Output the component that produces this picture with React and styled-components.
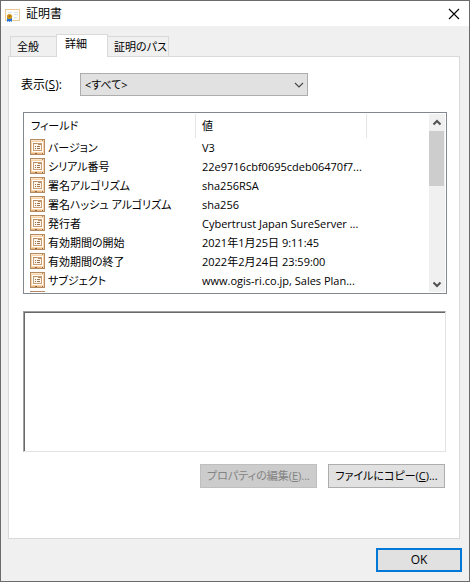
import React, { useState } from "react";
import styled, { createGlobalStyle, css } from "styled-components";

const GlobalStyle = createGlobalStyle`
	* {
		box-sizing: border-box;
	}
	body {
		margin: 0;
		background-color: #f0f0f0;
	}
	body, button, select, textarea {
		font-family: "Open Sans", "Noto Sans CJK JP", sans-serif;
		font-size: 11px;
		line-height: 16px;
		font-feature-settings: "palt";
		color: #000;
	}
`;

const Dialog = styled.div`
	display: flex;
	flex-direction: column;
	min-height: 100vh;
	border: 1px solid #6b6b6b;
	background-color: #f0f0f0;
`;

const TitleBar = styled.header`
	display: flex;
	align-items: center;
	height: 25px;
	padding-left: 4px;
	background-color: #fff;
`;

const Title = styled.h1`
	flex: 1;
	margin: 0 0 0 5px;
	font-size: 12px;
	font-weight: normal;
`;

const CloseButton = styled.button`
	display: flex;
	align-items: center;
	justify-content: center;
	width: 30px;
	height: 25px;
	padding: 0;
	border: none;
	background: none;
`;

const TabList = styled.div`
	display: flex;
	align-items: flex-end;
	height: 30px;
	padding-left: 9px;
`;

const Tab = styled.button`
	width: ${(props) => props.$width}px;
	height: 20px;
	padding: 0 0 0 6px;
	border: 1px solid #d9d9d9;
	border-bottom: none;
	border-left-width: ${(props) => (props.$first ? 1 : 0)}px;
	background-color: #f0f0f0;
	text-align: left;
	white-space: nowrap;

	${(props) =>
		props.$active &&
		css`
			height: 23px;
			margin-bottom: -1px;
			padding-bottom: 4px;
			padding-left: 8px;
			border-left-width: 1px;
			margin-left: -1px;
			background-color: #fff;
			z-index: 1;
		`}
`;

const Panel = styled.main`
	display: flex;
	flex: 1;
	flex-direction: column;
	margin: 0 9px 0 7px;
	padding: 16px 12px 50px 14px;
	border: 1px solid #d9d9d9;
	background-color: #fff;
`;

const FilterRow = styled.div`
	display: flex;
	align-items: center;
`;

const FilterLabel = styled.label`
	width: 59px;
	margin-left: -2px;
	font-size: 12px;
`;

const SelectBox = styled.div`
	display: grid;
	align-items: center;
	width: 228px;

	> * {
		grid-area: 1 / 1;
	}

	> svg {
		justify-self: end;
		margin-right: 4px;
		pointer-events: none;
	}
`;

const Select = styled.select`
	width: 100%;
	height: 23px;
	padding: 0 20px 0 4px;
	border: 1px solid #adadad;
	border-radius: 0;
	background-color: #e1e1e1;
	appearance: none;
`;

const ListBox = styled.div`
	display: flex;
	height: 182px;
	margin-top: 16px;
	padding: 1px;
	border: 1px solid #828790;
`;

const ListView = styled.div`
	flex: 1;
	min-width: 0;
	overflow: hidden;
`;

const Table = styled.table`
	width: 100%;
	border-collapse: separate;
	border-spacing: 0;
	table-layout: fixed;
`;

const HeadCell = styled.th`
	width: ${(props) => (props.$width ? `${props.$width}px` : "auto")};
	height: 24px;
	padding: 0 6px;
	border-right: ${(props) => (props.$width ? "1px solid #e5e5e5" : "none")};
	font-weight: normal;
	text-align: left;
`;

const Cell = styled.td`
	height: 19px;
	padding: 0 0 0 6px;
	white-space: nowrap;

	&:first-child {
		padding-left: 5px;
	}
`;

const Field = styled.div`
	display: flex;
	align-items: center;
	gap: 2px;
`;

const ScrollBar = styled.div`
	display: flex;
	flex-direction: column;
	width: 16px;
	background-color: #f0f0f0;
`;

const ScrollButton = styled.button`
	display: flex;
	align-items: center;
	justify-content: center;
	height: 17px;
	padding: 0;
	border: none;
	background: none;
`;

const ScrollTrack = styled.div`
	flex: 1;
`;

const ScrollThumb = styled.div`
	height: 55px;
	margin-right: 1px;
	background-color: #cdcdcd;
`;

const DetailText = styled.textarea`
	display: block;
	height: 141px;
	margin: 17px 1px 0 0;
	border: 1px solid;
	border-color: #a0a0a0 #e3e3e3 #e3e3e3 #a0a0a0;
	box-shadow: inset 1px 1px #696969;
	outline: none;
	resize: none;
`;

const Actions = styled.div`
	display: flex;
	justify-content: flex-end;
	gap: 11px;
	margin-top: 12px;
	padding-right: 2px;
`;

const Button = styled.button`
	width: 117px;
	height: 24px;
	padding: 0;
	border: 1px solid #adadad;
	background-color: #e1e1e1;

	&:disabled {
		border-color: #bfbfbf;
		background-color: #ccc;
		color: #838383;
	}
`;

const OkButton = styled(Button)`
	width: 86px;
	border: 2px solid #0078d7;
	font-size: 12px;
`;

const Footer = styled.footer`
	display: flex;
	justify-content: flex-end;
	padding: 9px 7px;
`;

const CertificateIcon = () => (
	<svg width='16' height='16' viewBox='0 0 16 16'>
		<rect x='0.5' y='3.5' width='14' height='11' fill='#fffdf8' stroke='#ecc997' />
		<path d='M3 6.5h4M9 6.5h4M9 8.5h4M9 11.5h3' stroke='#dbe3ea' />
		<path d='M2 12h2.5v4l-1.2-1L2 16zM4.5 12H7v4l-1.3-1-1.2 1z' fill='#2474d5' />
		<circle cx='4.5' cy='10.5' r='2.6' fill='#d1961a' />
		<circle cx='4.5' cy='10.3' r='1' fill='#a8700c' />
	</svg>
);

const FieldIcon = () => (
	<svg width='16' height='17' viewBox='0 0 16 17' shapeRendering='crispEdges'>
		<rect x='0' y='0' width='15' height='16' rx='1' fill='#b58b64' />
		<rect x='1' y='1' width='13' height='14' fill='#fbd3a8' />
		<path d='M1 1.5h11' stroke='#fde6cd' />
		<rect x='12' y='1' width='1' height='1' fill='#b58b64' />
		<rect x='2' y='3' width='11' height='10' fill='#fff' />
		<rect x='3.5' y='4.5' width='8' height='7' fill='#fff7ed' stroke='#c99e76' />
		<path d='M3 4.5h4M8 5.5h3' stroke='#b58b64' />
		<path d='M5 7.5h1M7 7.5h3M5 9.5h1M7 9.5h3' stroke='#9c7350' />
		<path d='M1 14.5h4M7 14.5h4' stroke='#e8b680' />
		<path d='M5 14.5h2M12 14.5h1' stroke='#8d6540' />
	</svg>
);

const ArrowIcon = ({ down }) => (
	<svg width='10' height='10' viewBox='0 0 10 10'>
		<path
			d={down ? "M1.5 3.5L5 7L8.5 3.5" : "M1.5 6.5L5 3L8.5 6.5"}
			fill='none'
			stroke='#505050'
			strokeWidth='2'
		/>
	</svg>
);

const fields = [
	{ name: "バージョン", value: "V3" },
	{ name: "シリアル番号", value: "22e9716cbf0695cdeb06470f7..." },
	{ name: "署名アルゴリズム", value: "sha256RSA" },
	{ name: "署名ハッシュ アルゴリズム", value: "sha256" },
	{ name: "発行者", value: "Cybertrust Japan SureServer ..." },
	{ name: "有効期間の開始", value: "2021年1月25日 9:11:45" },
	{ name: "有効期間の終了", value: "2022年2月24日 23:59:00" },
	{ name: "サブジェクト", value: "www.ogis-ri.co.jp, Sales Plan..." },
	{ name: "", value: "" },
];

const App = () => {
	const [filter, setFilter] = useState("all");

	return (
		<Dialog role='dialog' aria-labelledby='title'>
			<GlobalStyle />
			<TitleBar>
				<CertificateIcon />
				<Title id='title'>証明書</Title>
				<CloseButton aria-label='閉じる'>
					<svg width='12' height='12' viewBox='0 0 12 12'>
						<path d='M1 1L11 11M11 1L1 11' stroke='#000' strokeWidth='1.1' />
					</svg>
				</CloseButton>
			</TitleBar>

			<TabList role='tablist'>
				<Tab role='tab' $width={47} $first>
					全般
				</Tab>
				<Tab role='tab' $width={52} $active aria-selected='true'>
					詳細
				</Tab>
				<Tab role='tab' $width={61}>
					証明のパス
				</Tab>
			</TabList>

			<Panel role='tabpanel'>
				<FilterRow>
					<FilterLabel htmlFor='filter'>
						表示(<u>S</u>):
					</FilterLabel>
					<SelectBox>
						<Select
							id='filter'
							value={filter}
							onChange={(e) => setFilter(e.target.value)}
						>
							<option value='all'>&lt;すべて&gt;</option>
						</Select>
						<svg width='10' height='6' viewBox='0 0 10 6'>
							<path d='M1 1L5 5L9 1' fill='none' stroke='#444' strokeWidth='1.1' />
						</svg>
					</SelectBox>
				</FilterRow>

				<ListBox>
					<ListView>
						<Table>
							<thead>
								<tr>
									<HeadCell $width={171}>フィールド</HeadCell>
									<HeadCell $width={171}>値</HeadCell>
									<HeadCell />
								</tr>
							</thead>
							<tbody>
								{fields.map((field, index) => (
									<tr key={index}>
										<Cell>
											<Field>
												<FieldIcon />
												{field.name}
											</Field>
										</Cell>
										<Cell>{field.value}</Cell>
										<Cell />
									</tr>
								))}
							</tbody>
						</Table>
					</ListView>
					<ScrollBar>
						<ScrollButton aria-label='上へ'>
							<ArrowIcon />
						</ScrollButton>
						<ScrollTrack>
							<ScrollThumb />
						</ScrollTrack>
						<ScrollButton aria-label='下へ'>
							<ArrowIcon down />
						</ScrollButton>
					</ScrollBar>
				</ListBox>

				<DetailText aria-label='値の詳細' readOnly />

				<Actions>
					<Button disabled>
						プロパティの編集(<u>E</u>)...
					</Button>
					<Button>
						ファイルにコピー(<u>C</u>)...
					</Button>
				</Actions>
			</Panel>

			<Footer>
				<OkButton>OK</OkButton>
			</Footer>
		</Dialog>
	);
};

export default App;
